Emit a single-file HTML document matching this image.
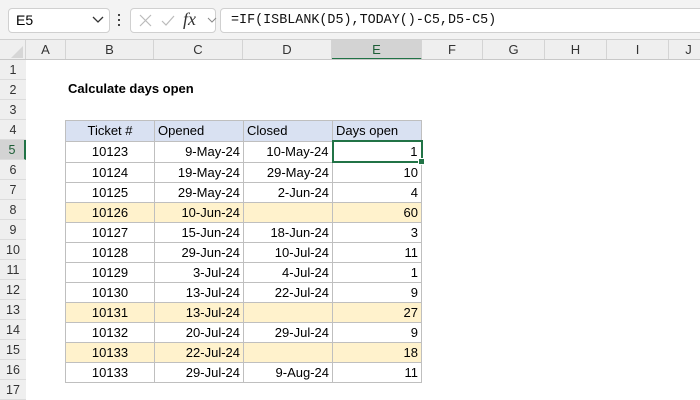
<!DOCTYPE html>
<html><head><style>
body{margin:0;width:700px;height:400px;overflow:hidden;background:#fff;font-family:"Liberation Sans",sans-serif;position:relative}
.a{position:absolute;box-sizing:border-box}
.ch{position:absolute;top:40px;height:20px;line-height:20px;text-align:center;font-size:13px;color:#333;border-right:1px solid #d4d4d4;box-sizing:border-box;background:#efefef}
.rh{position:absolute;left:0;width:26px;height:20px;line-height:20px;text-align:center;font-size:12.5px;color:#333;background:#efefef;border-bottom:1px solid #dcdcdc;box-sizing:border-box}
table{position:absolute;left:65px;top:120px;border-collapse:collapse;font-size:13px;color:#000}
td{border:1px solid #bfbfbf;height:19px;padding:0 3px;line-height:19px;white-space:nowrap}
td.c{text-align:center}td.r{text-align:right}
tr.h td{background:#d9e1f2}
tr.y td{background:#fff2cc}
</style></head><body>
<div class="a" style="left:0;top:0;width:700px;height:40px;background:#f3f3f3;border-bottom:1px solid #d0d0d0"></div>
<div class="a" style="left:8px;top:8px;width:102px;height:25px;background:#fff;border:1px solid #d0d0d0;border-radius:4px;font-size:14px;line-height:23px;padding-left:7px">E5</div>
<svg class="a" style="left:92px;top:16px" width="12" height="8"><path d="M1 1l5 5 5-5" stroke="#333" fill="none" stroke-width="1.3"/></svg>
<div class="a" style="left:118px;top:14px;width:2px;height:2px;background:#444;box-shadow:0 5px #444,0 10px #444"></div>
<div class="a" style="left:130px;top:8px;width:86px;height:25px;background:#fff;border:1px solid #d0d0d0;border-radius:4px"></div>
<svg class="a" style="left:138px;top:14px" width="80" height="14"><path d="M2 1l11 11M13 1L2 12" stroke="#bbb" stroke-width="1.2"/><path d="M24 7l4 4 8-9" stroke="#bbb" fill="none" stroke-width="1.2"/><path d="M70 4l4 4 4-4" stroke="#888" fill="none" stroke-width="1"/></svg>
<div class="a" style="left:183px;top:9px;font-family:'Liberation Serif',serif;font-style:italic;font-size:18px;color:#333">fx</div>
<div class="a" style="left:220px;top:8px;width:490px;height:25px;background:#fff;border:1px solid #d0d0d0;border-radius:4px;font-family:'Liberation Mono',monospace;font-size:13.4px;line-height:23px;padding-left:10px;color:#111">=IF(ISBLANK(D5),TODAY()-C5,D5-C5)</div>
<div class="a" style="left:0;top:40px;width:26px;height:20px;background:#efefef;border-right:1px solid #d4d4d4"></div>
<svg class="a" style="left:10px;top:45px" width="14" height="14"><path d="M13 1V13H1z" fill="#d6d6d6"/></svg>
<div class="ch" style="left:26px;width:40px">A</div>
<div class="ch" style="left:66px;width:88px">B</div>
<div class="ch" style="left:154px;width:89px">C</div>
<div class="ch" style="left:243px;width:89px">D</div>
<div class="ch" style="left:332px;width:90px;background:#d3d3d3;border-bottom:2px solid #217346;color:#1d5e36">E</div>
<div class="ch" style="left:422px;width:61px">F</div>
<div class="ch" style="left:483px;width:62px">G</div>
<div class="ch" style="left:545px;width:62px">H</div>
<div class="ch" style="left:607px;width:62px">I</div>
<div class="ch" style="left:669px;width:40px">J</div>
<div class="a" style="left:0;top:59px;width:700px;height:1px;background:#c8c8c8"></div>
<div class="a" style="left:25px;top:60px;width:1px;height:340px;background:#c8c8c8"></div>
<div class="rh" style="top:60px">1</div><div class="rh" style="top:80px">2</div><div class="rh" style="top:100px">3</div><div class="rh" style="top:120px">4</div>
<div class="rh" style="top:140px;background:#d3d3d3;border-right:2px solid #217346;color:#1d5e36">5</div>
<div class="rh" style="top:160px">6</div><div class="rh" style="top:180px">7</div><div class="rh" style="top:200px">8</div><div class="rh" style="top:220px">9</div><div class="rh" style="top:240px">10</div><div class="rh" style="top:260px">11</div><div class="rh" style="top:280px">12</div><div class="rh" style="top:300px">13</div><div class="rh" style="top:320px">14</div><div class="rh" style="top:340px">15</div><div class="rh" style="top:360px">16</div><div class="rh" style="top:380px">17</div>
<div class="a" style="left:68px;top:81px;font-size:13px;font-weight:bold">Calculate days open</div>
<table>
<colgroup><col style="width:89px"><col style="width:89px"><col style="width:89px"><col style="width:89px"></colgroup>
<tr class="h"><td class="c">Ticket #</td><td>Opened</td><td>Closed</td><td>Days open</td></tr>
<tr><td class="c">10123</td><td class="r">9-May-24</td><td class="r">10-May-24</td><td class="r" style="border:2px solid #217346;position:relative">1<span style="position:absolute;right:-4px;bottom:-4px;width:5px;height:5px;background:#217346;border:1px solid #fff"></span></td></tr>
<tr><td class="c">10124</td><td class="r">19-May-24</td><td class="r">29-May-24</td><td class="r">10</td></tr>
<tr><td class="c">10125</td><td class="r">29-May-24</td><td class="r">2-Jun-24</td><td class="r">4</td></tr>
<tr class="y"><td class="c">10126</td><td class="r">10-Jun-24</td><td class="r"></td><td class="r">60</td></tr>
<tr><td class="c">10127</td><td class="r">15-Jun-24</td><td class="r">18-Jun-24</td><td class="r">3</td></tr>
<tr><td class="c">10128</td><td class="r">29-Jun-24</td><td class="r">10-Jul-24</td><td class="r">11</td></tr>
<tr><td class="c">10129</td><td class="r">3-Jul-24</td><td class="r">4-Jul-24</td><td class="r">1</td></tr>
<tr><td class="c">10130</td><td class="r">13-Jul-24</td><td class="r">22-Jul-24</td><td class="r">9</td></tr>
<tr class="y"><td class="c">10131</td><td class="r">13-Jul-24</td><td class="r"></td><td class="r">27</td></tr>
<tr><td class="c">10132</td><td class="r">20-Jul-24</td><td class="r">29-Jul-24</td><td class="r">9</td></tr>
<tr class="y"><td class="c">10133</td><td class="r">22-Jul-24</td><td class="r"></td><td class="r">18</td></tr>
<tr><td class="c">10133</td><td class="r">29-Jul-24</td><td class="r">9-Aug-24</td><td class="r">11</td></tr>
</table>
</body></html>
